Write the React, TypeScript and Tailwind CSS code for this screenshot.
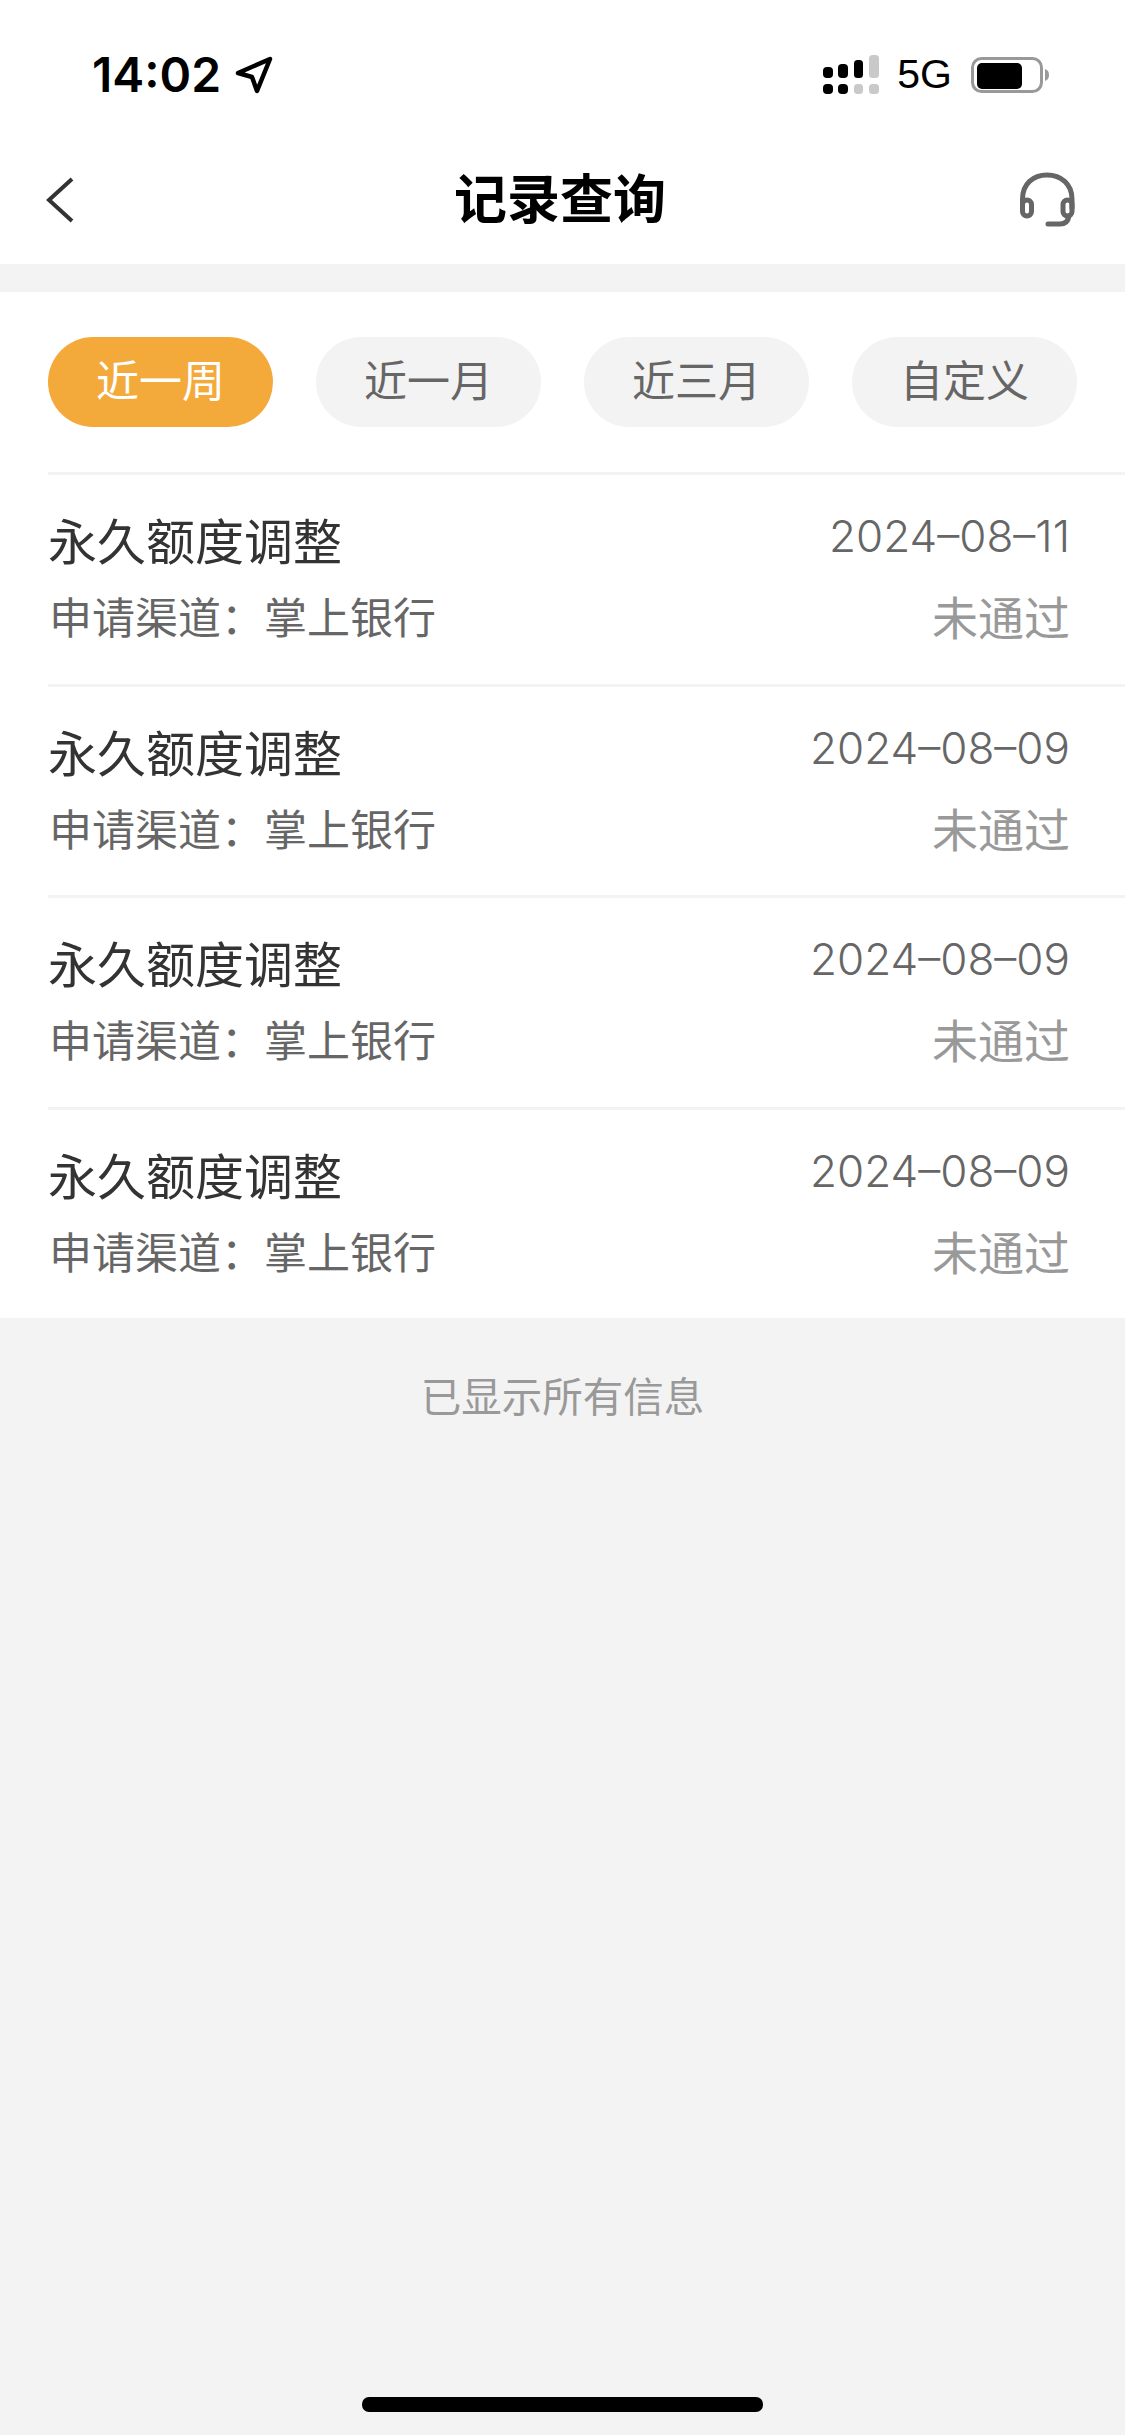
import React from "react";

const FONT = "[font-family:'Noto_Sans_CJK_SC','Noto_Sans',sans-serif]";

function Signal() {
  return (
    <svg width="56" height="39" viewBox="0 0 56 39" className="block">
      <rect x="0" y="12" width="10" height="11" rx="4" fill="#000" />
      <rect x="15" y="9" width="10" height="14" rx="4" fill="#000" />
      <rect x="31" y="5" width="9" height="18" rx="3.5" fill="#000" />
      <rect x="46" y="0" width="10" height="23" rx="3.5" fill="#c9c9c9" />
      <rect x="0" y="29" width="10" height="10" rx="4" fill="#000" />
      <rect x="15" y="29" width="10" height="10" rx="4" fill="#000" />
      <rect x="31" y="29" width="9" height="10" rx="3.5" fill="#c9c9c9" />
      <rect x="46" y="29" width="10" height="10" rx="3.5" fill="#c9c9c9" />
    </svg>
  );
}

function Battery() {
  return (
    <svg width="78" height="36" viewBox="0 0 78 36" className="block">
      <rect x="1.5" y="1.5" width="69" height="33" rx="9" fill="none" stroke="#999" strokeWidth="3" />
      <rect x="6" y="6" width="45" height="26" rx="5" fill="#000" />
      <path d="M74 12 C77 13 78 15 78 18 C78 21 77 23 74 24 Z" fill="#999" />
    </svg>
  );
}

function Arrow() {
  return (
    <svg width="38" height="38" viewBox="0 0 38 38" className="block">
      <path d="M3 17 L35 3 L22 35 L17 21 Z" fill="none" stroke="#000" strokeWidth="4.5" strokeLinejoin="round" />
    </svg>
  );
}

function Headset() {
  return (
    <svg width="56" height="56" viewBox="0 0 56 56" className="block">
      <g fill="none" stroke="#666" strokeWidth="5" strokeLinecap="round">
        <path d="M3.5 36 V27 C3.5 12 14 3 28 3 C42 3 53 12 53 27 V36" />
        <rect x="3.5" y="28" width="9" height="16" rx="4.5" />
        <rect x="44" y="28" width="9" height="16" rx="4.5" />
        <path d="M50 44 C49 50 46 52 41 52 H29" />
      </g>
    </svg>
  );
}

function Pill({ label, active }: { label: string; active?: boolean }) {
  return (
    <div
      className={
        active
          ? "w-[225px] h-[90px] rounded-full bg-[#f3aa3b] text-white text-[43px] leading-[83px] text-center"
          : "w-[225px] h-[90px] rounded-full bg-[#f3f3f3] text-[#666666] text-[43px] leading-[83px] text-center"
      }
    >
      {label}
    </div>
  );
}

function Row({ date }: { date: string }) {
  return (
    <div className="ml-[48px] border-t-[3px] border-[#f3f3f3] pt-[34px] pb-[38.5px] pr-[55px]">
      <div className="flex justify-between items-start h-[60px]">
        <span className="text-[49px] leading-[60px] text-[#333333]">永久额度调整</span>
        <span className="mt-[4px] text-[44px] leading-[46px] text-[#666666] font-['Inter',sans-serif] font-[350]">{date}</span>
      </div>
      <div className="flex justify-between items-center h-[60px] mt-[16px]">
        <span className="text-[43px] leading-[60px] text-[#666666] pl-[1px]">{"申请渠道\uFF1A掌上银行"}</span>
        <span className="text-[46px] leading-[60px] text-[#999999]">未通过</span>
      </div>
    </div>
  );
}

export default function App() {
  return (
    <div className={`w-[1125px] h-[2435px] bg-[#f3f3f3] flex flex-col overflow-hidden ${FONT}`}>
      <div className="bg-white h-[264px]">
        <div className="h-[136px] flex justify-between items-start pl-[92px] pr-[76px] pt-[50px]">
          <div className="flex items-center gap-[14px]">
            <span className="text-[48px] leading-[50px] font-semibold text-black font-['Inter',sans-serif]">14:02</span>
            <Arrow />
          </div>
          <div className="flex items-center pt-[5px]">
            <Signal />
            <span className="ml-[18px] text-[41px] leading-[39px] text-black font-['Liberation_Sans',sans-serif]">5G</span>
            <div className="ml-[19px]">
              <Battery />
            </div>
          </div>
        </div>
        <div className="h-[128px] flex justify-between items-center pl-[46px] pr-[50px]">
          <div className="w-[56px]">
            <svg width="28" height="46" viewBox="0 0 28 46" className="block">
              <path d="M26 2 L3 23 L26 44" fill="none" stroke="#333" strokeWidth="4" />
            </svg>
          </div>
          <span className="ml-[-1px] text-[53px] leading-[60px] mb-[8px] font-bold text-black">记录查询</span>
          <Headset />
        </div>
      </div>
      <div className="mt-[28px] bg-white">
        <div className="flex justify-between px-[48px] pt-[45px] pb-[45px]">
          <Pill label="近一周" active />
          <Pill label="近一月" />
          <Pill label="近三月" />
          <Pill label="自定义" />
        </div>
        <Row date="2024–08–11" />
        <Row date="2024–08–09" />
        <Row date="2024–08–09" />
        <Row date="2024–08–09" />
      </div>
      <div className="mt-[52px] text-center text-[40.5px] leading-[50px] text-[#999999]">已显示所有信息</div>
      <div className="mt-auto mb-[23px] mx-auto w-[401px] h-[15px] rounded-[7px] bg-black" />
    </div>
  );
}
